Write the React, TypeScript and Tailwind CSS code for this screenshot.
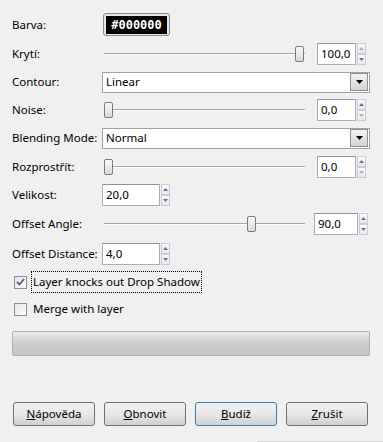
import React from "react";

const font = { fontFamily: '"Noto Sans", "Liberation Sans", sans-serif' };

function SpinArrows({ upOn = true, downOn = true }: { upOn?: boolean; downOn?: boolean }) {
    const arrow = (up: boolean, on: boolean) => (
        <div className="w-[9px] h-[11px] border border-[#c9ccd2] bg-gradient-to-b from-[#fbfbfb] to-[#e9e9ea] flex items-center justify-center">
            <svg width="5" height="3" viewBox="0 0 5 3">
                <path d={up ? "M0 3 L2.5 0 L5 3 Z" : "M0 0 L2.5 3 L5 0 Z"} fill={on ? "#5d6fa8" : "#a9adb5"} />
            </svg>
        </div>
    );
    return (
        <div className="flex flex-col ml-[1px]">
            {arrow(true, upOn)}
            {arrow(false, downOn)}
        </div>
    );
}

function SpinBox({ value, width, upOn, downOn }: { value: string; width: string; upOn?: boolean; downOn?: boolean }) {
    return (
        <div className="flex items-center">
            <div className={`${width} h-[22px] bg-white border border-[#abadb3] border-t-[#8f9399] flex items-center pl-[3px] text-[11.5px] text-black`}>
                {value}
            </div>
            <SpinArrows upOn={upOn} downOn={downOn} />
        </div>
    );
}

function Slider({ pos }: { pos: number }) {
    return (
        <div className="relative w-[207px] h-[22px] flex items-center">
            <div className="ml-[2px] w-[201px] h-[2px] border-t border-[#a7a7a7] border-b border-b-[#ffffff]" />
            <div
                className="absolute top-[3px] w-[9px] h-[16px] rounded-[2px] border border-[#7c7c7c] bg-gradient-to-b from-[#fafafa] to-[#d9d9d9]"
                style={{ left: pos }}
            />
        </div>
    );
}

function Combo({ value }: { value: string }) {
    return (
        <div className="w-[268px] h-[21px] bg-white border border-[#a2a2a2] flex items-center justify-between">
            <span className="pl-[3px] text-[11.5px] text-black">{value}</span>
            <div className="w-[18px] h-[18px] mr-[1px] border border-[#8e8f8f] bg-gradient-to-b from-[#f4f4f4] to-[#d4d4d4] flex items-center justify-center">
                <svg width="7" height="4" viewBox="0 0 7 4">
                    <path d="M0 0 L7 0 L3.5 4 Z" fill="#000" />
                </svg>
            </div>
        </div>
    );
}

function Row({ h, label, children }: { h: string; label: string; children: React.ReactNode }) {
    return (
        <div className={`${h} flex items-center`}>
            <div className="w-[90px] text-[11.5px] text-black">{label}</div>
            {children}
        </div>
    );
}

function Check({ checked, label, focus }: { checked?: boolean; label: string; focus?: boolean }) {
    return (
        <div className="flex items-center">
            <div className="w-[13px] h-[13px] border border-[#8e8f8f] bg-gradient-to-br from-[#e6e6e6] to-[#fbfbfb] flex items-center justify-center ml-[2px]">
                {checked && (
                    <svg width="9" height="8" viewBox="0 0 9 8">
                        <path d="M1 4 L3.5 6.5 L8 1" stroke="#4a5f97" strokeWidth="1.8" fill="none" />
                    </svg>
                )}
            </div>
            <div className={`ml-[4px] px-[1px] py-[1px] text-[11.5px] text-black ${focus ? "border border-dotted border-black" : "border border-transparent"}`}>
                {label}
            </div>
        </div>
    );
}

function Btn({ label, blue }: { label: React.ReactNode; blue?: boolean }) {
    return (
        <div
            className={`w-[82px] h-[24px] rounded-[3px] border ${blue ? "border-[#3c7fb1]" : "border-[#707070]"} flex items-center justify-center text-[11.5px] text-black bg-gradient-to-b from-[#f2f2f2] via-[#e8e8e8] to-[#d0d0d0]`}
        >
            {label}
        </div>
    );
}

export default function App() {
    return (
        <div className="w-[383px] h-[442px] bg-[#f0f0f0] flex flex-col" style={font}>
            <div className="pl-[12px] pt-[10px] flex flex-col">
                <Row h="h-[29px]" label="Barva:">
                    <div className="ml-[1px] w-[67px] h-[23px] rounded-[3px] border border-[#8a8a8a] bg-[#e6e6e6] flex items-center justify-center">
                        <div className="w-[61px] h-[18px] bg-black flex items-center justify-center text-white text-[12px] font-bold" style={{ fontFamily: '"DejaVu Sans Mono", monospace' }}>
                            #000000
                        </div>
                    </div>
                </Row>
                <Row h="h-[29px]" label="Krytí:">
                    <Slider pos={193} />
                    <div className="ml-[8px]">
                        <SpinBox value="100,0" width="w-[39px]" upOn={false} downOn />
                    </div>
                </Row>
                <Row h="h-[28px]" label="Contour:">
                    <Combo value="Linear" />
                </Row>
                <Row h="h-[28px]" label="Noise:">
                    <Slider pos={2} />
                    <div className="ml-[8px]">
                        <SpinBox value="0,0" width="w-[39px]" upOn downOn={false} />
                    </div>
                </Row>
                <Row h="h-[28px]" label="Blending Mode:">
                    <Combo value="Normal" />
                </Row>
                <Row h="h-[29px]" label="Rozprostřít:">
                    <Slider pos={2} />
                    <div className="ml-[8px]">
                        <SpinBox value="0,0" width="w-[39px]" upOn downOn={false} />
                    </div>
                </Row>
                <Row h="h-[28px]" label="Velikost:">
                    <SpinBox value="20,0" width="w-[58px]" />
                </Row>
                <Row h="h-[30px]" label="Offset Angle:">
                    <Slider pos={145} />
                    <div className="ml-[5px]">
                        <SpinBox value="90,0" width="w-[44px]" />
                    </div>
                </Row>
                <Row h="h-[29px]" label="Offset Distance:">
                    <SpinBox value="4,0" width="w-[58px]" />
                </Row>
                <div className="h-[28px] flex items-center">
                    <Check checked focus label="Layer knocks out Drop Shadow" />
                </div>
                <div className="h-[26px] flex items-center">
                    <Check label="Merge with layer" />
                </div>
            </div>
            <div className="mt-[9px] ml-[12px] w-[358px] h-[25px] rounded-[2px] border border-[#b2b2b2] bg-gradient-to-b from-[#ececec] via-[#cbcbcb] to-[#c6c6c6]" />
            <div className="mt-[46px] ml-[13px] flex gap-[9px]">
                <Btn label={<span><u>N</u>ápověda</span>} />
                <Btn label={<span><u>O</u>bnovit</span>} />
                <Btn blue label={<span><u>B</u>udiž</span>} />
                <Btn label={<span><u>Z</u>rušit</span>} />
            </div>
            <div className="mt-auto flex justify-end">
                <div className="w-[126px] h-px bg-[#d6d6d6]" />
            </div>
        </div>
    );
}
